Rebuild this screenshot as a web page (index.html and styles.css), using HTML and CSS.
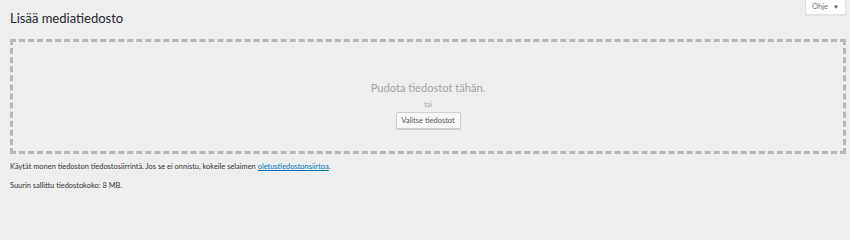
FILE: index.html
```html
<!DOCTYPE html>
<html lang="fi">
<head>
<meta charset="utf-8">
<title>Lisää mediatiedosto</title>
<link rel="stylesheet" href="styles.css">
</head>
<body>
<div class="wrap">
  <div class="topbar">
    <h1 class="title">Lisää mediatiedosto</h1>
    <button class="help-tab" type="button">Ohje <span class="arrow">▼</span></button>
  </div>
  <div class="dropzone">
    <p class="drop-info">Pudota tiedostot tähän.</p>
    <p class="drop-or">tai</p>
    <button class="select-btn" type="button">Valitse tiedostot</button>
  </div>
  <p class="note">Käytät monen tiedoston tiedostosiirrintä. Jos se ei onnistu, kokeile selaimen <a href="#">oletustiedostonsiirtoa</a>.</p>
  <p class="note max">Suurin sallittu tiedostokoko: 8 MB.</p>
</div>
</body>
</html>
```

FILE: styles.css
```css
html, body {
  margin: 0;
  padding: 0;
  background: #eeeeee;
  font-family: Lato, "Open Sans", sans-serif;
  color: #32373c;
}
.wrap {
  padding: 0 4px 0 10px;
}
.topbar {
  display: flex;
  justify-content: space-between;
  align-items: flex-start;
  height: 39px;
}
.title {
  margin: 9px 0 0 0;
  font-size: 13px;
  font-weight: 400;
  color: #23282d;
  line-height: 18px;
}
.help-tab {
  margin: 0;
  height: 15px;
  width: 41px;
  padding: 0;
  background: #fff;
  border: 1px solid #e0e0e0;
  border-top: none;
  box-shadow: 0 1px 1px rgba(0,0,0,0.04);
  font-family: inherit;
  font-size: 7.5px;
  color: #72777c;
  line-height: 14px;
  display: flex;
  align-items: center;
  justify-content: center;
  gap: 5px;
}
.help-tab .arrow {
  font-size: 6px;
  color: #555;
}
.dropzone {
  border: 3px dashed #b4b9be;
  height: 109px;
  display: flex;
  flex-direction: column;
  align-items: center;
}
.drop-info {
  margin: 38px 0 0 0;
  font-size: 11.1px;
  line-height: 16px;
  color: #a0a5aa;
}
.drop-or {
  margin: 3px 0 0 0;
  font-size: 7px;
  line-height: 10px;
  color: #a0a5aa;
}
.select-btn {
  margin-top: 3px;
  height: 17px;
  width: 65px;
  padding: 0;
  background: #f7f7f7;
  border: 1px solid #cccccc;
  border-radius: 2px;
  box-shadow: 0 1px 0 #ccc;
  font-family: inherit;
  font-size: 7.5px;
  color: #555;
  line-height: 15px;
}
.note {
  margin: 7px 0 0 0;
  font-size: 7.45px;
  line-height: 12px;
  color: #32373c;
}
.note a {
  color: #0073aa;
  text-decoration: underline;
}
.note.max {
  margin-top: 7px;
}
```
